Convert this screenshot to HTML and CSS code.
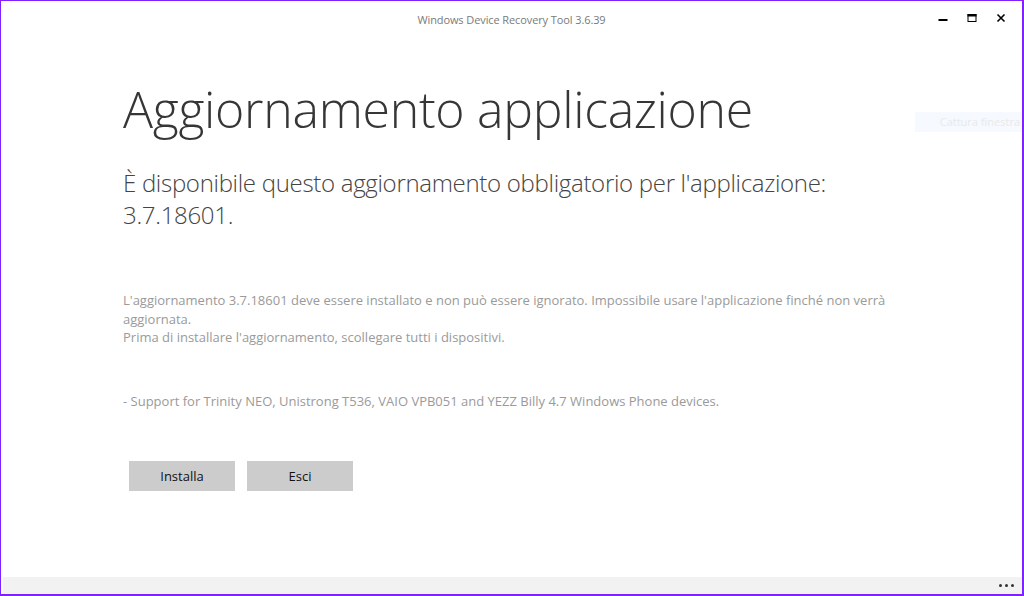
FILE: index.html
```html
<!DOCTYPE html>
<html lang="it">
<head>
<meta charset="utf-8">
<title>Windows Device Recovery Tool</title>
<link rel="stylesheet" href="styles.css">
</head>
<body>
<div class="window">
  <div class="titlebar">
    <div class="title">Windows Device Recovery Tool 3.6.39</div>
    <div class="controls">
      <span class="ctl">
        <svg width="10" height="10" viewBox="0 0 10 10"><rect x="0.5" y="6" width="9" height="2" fill="#000"/></svg>
      </span>
      <span class="ctl">
        <svg width="10" height="10" viewBox="0 0 10 10"><rect x="1" y="1.5" width="8" height="7" fill="none" stroke="#000"/><rect x="0.5" y="1" width="9" height="2.5" fill="#000"/></svg>
      </span>
      <span class="ctl">
        <svg width="10" height="10" viewBox="0 0 10 10"><path d="M1.5 1.5 L8.5 8.5 M8.5 1.5 L1.5 8.5" stroke="#000" stroke-width="1.6"/></svg>
      </span>
    </div>
  </div>
  <div class="main">
    <div class="tip">Cattura finestra</div>
    <h1 class="heading">Aggiornamento applicazione</h1>
    <p class="subheading">È disponibile questo aggiornamento obbligatorio per l'applicazione:<br>3.7.18601.</p>
    <p class="body-text intro">L'aggiornamento 3.7.18601 deve essere installato e non può essere ignorato. Impossibile usare l'applicazione finché non verrà aggiornata.<br>Prima di installare l'aggiornamento, scollegare tutti i dispositivi.</p>
    <p class="body-text notes">- Support for Trinity NEO, Unistrong T536, VAIO VPB051 and YEZZ Billy 4.7 Windows Phone devices.</p>
    <div class="buttons">
      <button class="btn">Installa</button>
      <button class="btn">Esci</button>
    </div>
  </div>
  <div class="appbar">
    <span class="dots"><i></i><i></i><i></i></span>
  </div>
</div>
</body>
</html>
```
FILE: styles.css
```css
* { box-sizing: border-box; }
html, body { margin: 0; padding: 0; }
body {
  width: 1024px;
  height: 596px;
  overflow: hidden;
  background: #fff;
  font-family: "Open Sans", "Noto Sans", sans-serif;
}
.window {
  width: 1024px;
  height: 596px;
  border-style: solid;
  border-color: #7f22fd;
  border-width: 1px 2px 2px 1px;
  display: flex;
  flex-direction: column;
  background: #fff;
}
.titlebar {
  height: 38px;
  flex: none;
  position: relative;
  display: flex;
  align-items: center;
  justify-content: center;
}
.title {
  font-size: 11px;
  color: #7a7a7a;
  letter-spacing: -0.1px;
  margin-top: -1px;
}
.controls {
  position: absolute;
  right: 16px;
  top: 12px;
  display: flex;
  gap: 19px;
}
.ctl { width: 10px; height: 10px; display: block; }
.ctl svg { display: block; }
.main {
  flex: 1;
  position: relative;
  padding-left: 122px;
}
.tip {
  position: absolute;
  right: 0;
  top: 73px;
  width: 107px;
  height: 20px;
  background: #f6f9ff;
  color: #e9e9e9;
  font-size: 11px;
  line-height: 20px;
  text-align: right;
  padding-right: 2px;
}
.heading {
  margin: 40px 0 0 0;
  font-weight: 300;
  font-size: 50px;
  line-height: 60px;
  color: #363636;
  letter-spacing: -0.3px;
}
.subheading {
  margin: 28px 0 0 0;
  font-weight: 300;
  font-size: 24px;
  line-height: 32px;
  color: #444;
  letter-spacing: -0.3px;
}
.body-text {
  margin: 0;
  font-size: 13px;
  line-height: 18.5px;
  color: #9a9a9a;
  width: 790px;
}
.intro { margin-top: 60px; }
.notes { margin-top: 45px; }
.buttons {
  margin-top: 51px;
  margin-left: 6px;
  display: flex;
  gap: 12px;
}
.btn {
  width: 106px;
  height: 30px;
  border: 0;
  background: #cccccc;
  font-family: "Open Sans", "Noto Sans", sans-serif;
  font-size: 13px;
  color: #111;
  padding: 0;
}
.appbar {
  height: 17px;
  flex: none;
  background: #f2f2f2;
  margin-left: 2px;
  display: flex;
  justify-content: flex-end;
  align-items: center;
  padding-right: 8px;
}
.dots { display: flex; gap: 3px; }
.dots i { width: 3px; height: 3px; background: #333; border-radius: 50%; display: block; }
```
